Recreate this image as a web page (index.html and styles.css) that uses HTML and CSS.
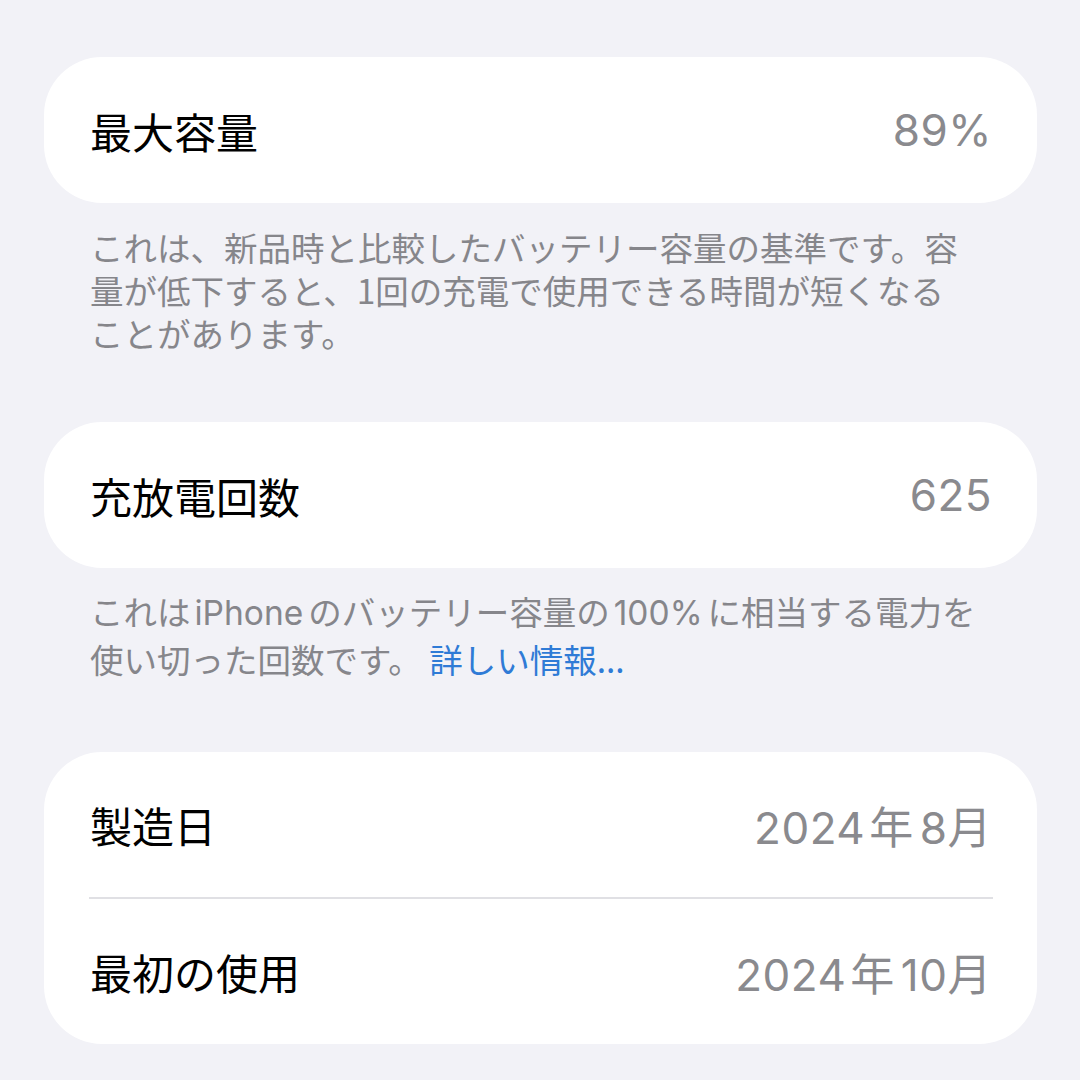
FILE: index.html
```html
<!DOCTYPE html>
<html lang="ja">
<head>
    <meta charset="UTF-8">
    <meta name="viewport" content="width=device-width, initial-scale=1.0">
    <title>バッテリーの状態</title>
    <link rel="stylesheet" href="styles.css">
</head>
<body>
    <div class="page">
        <section class="group">
            <div class="card">
                <div class="row">
                    <span class="label">最大容量</span>
                    <span class="value">89%</span>
                </div>
            </div>
            <p class="note">これは、新品時と比較したバッテリー容量の基準です。容<br>量が低下すると、1回の充電で使用できる時間が短くなる<br>ことがあります。</p>
        </section>

        <section class="group second">
            <div class="card">
                <div class="row">
                    <span class="label">充放電回数</span>
                    <span class="value">625</span>
                </div>
            </div>
            <p class="note tight">これは<span class="latin">iPhone</span>のバッテリー容量の<span class="latin">100%</span>に相当する電力を<br>使い切った回数です。 <a class="link" href="#">詳しい情報...</a></p>
        </section>

        <section class="group third">
            <div class="card">
                <div class="row">
                    <span class="label">製造日</span>
                    <span class="value">2024<span class="unit">年</span>8月</span>
                </div>
                <div class="divider"></div>
                <div class="row">
                    <span class="label">最初の使用</span>
                    <span class="value">2024<span class="unit">年</span>10月</span>
                </div>
            </div>
        </section>
    </div>
</body>
</html>
```

FILE: styles.css
```css
body {
    margin: 0;
    background-color: #f2f2f7;
    font-family: Inter, "Noto Sans CJK JP", sans-serif;
    color: #000;
}

.page {
    padding: 57px 43px 0 44px;
}

.group {
    margin-bottom: 68px;
}

.group.second {
    margin-bottom: 71px;
}

.card {
    background-color: #fff;
    border-radius: 58px;
    overflow: hidden;
}

.row {
    display: flex;
    justify-content: space-between;
    align-items: center;
    height: 146px;
    padding: 0 45px 0 46px;
}

.third .row {
    height: 145px;
}

.label {
    font-size: 42px;
    font-family: "Noto Sans CJK JP", sans-serif;
}

.value {
    font-size: 44px;
    color: #8a8a8e;
    letter-spacing: 0.5px;
}

.value .unit {
    font-family: "Noto Sans CJK JP", sans-serif;
    margin: 0 6px 0 4px;
}

.divider {
    height: 2px;
    background-color: #e0e0e4;
    margin: 0 44px 0 45px;
}

.note {
    margin: 22px 0 0 46px;
    font-size: 33.5px;
    line-height: 43px;
    color: #86868b;
    font-family: "Noto Sans CJK JP", sans-serif;
}

.note.tight {
    margin-top: 20px;
    line-height: 45px;
}

.note .latin {
    font-family: Inter, sans-serif;
    margin: 0 5px 0 4px;
}

.link {
    color: #2f7bd6;
    text-decoration: none;
}
```
